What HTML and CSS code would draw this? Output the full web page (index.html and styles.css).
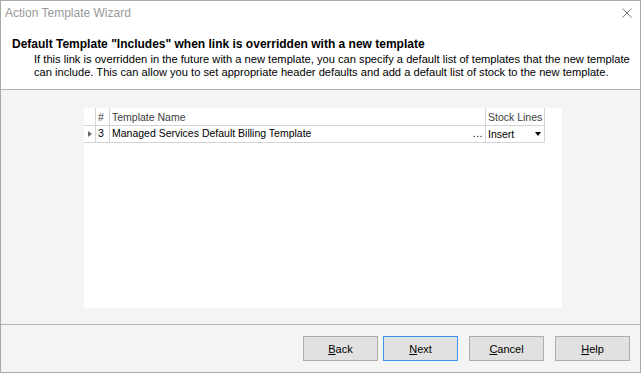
FILE: index.html
```html
<!DOCTYPE html>
<html lang="en">
  <head>
    <meta charset="UTF-8" />
    <title>Action Template Wizard</title>
    <link rel="stylesheet" href="styles.css">
  </head>
  <body>
    <div class="window">
      <div class="titlebar">
        <span class="title">Action Template Wizard</span>
        <svg class="close-btn" width="10" height="10" viewBox="0 0 10 10">
          <path d="M0.5 0.5 L9.5 9.5 M9.5 0.5 L0.5 9.5" stroke="#7a7a7a" stroke-width="1" fill="none" />
        </svg>
      </div>

      <div class="header">
        <div class="heading">Default Template "Includes" when link is overridden with a new template</div>
        <p class="desc">
          If this link is overridden in the future with a new template, you can specify a default list of templates that the new template<br />
          can include. This can allow you to set appropriate header defaults and add a default list of stock to the new template.
        </p>
      </div>

      <div class="content">
        <div class="grid-box">
          <div class="grid">
            <div class="cell head"></div>
            <div class="cell head">#</div>
            <div class="cell head">Template Name</div>
            <div class="cell head">Stock Lines</div>

            <div class="cell row ind"><span class="row-arrow"></span></div>
            <div class="cell row">3</div>
            <div class="cell row name">
              <span>Managed Services Default Billing Template</span>
              <span class="dots">...</span>
            </div>
            <div class="cell row combo">
              <span>Insert</span>
              <span class="drop-arrow"></span>
            </div>
          </div>
        </div>
      </div>

      <div class="footer">
        <button class="btn"><u>B</u>ack</button>
        <button class="btn btn-default"><u>N</u>ext</button>
        <button class="btn btn-gap"><u>C</u>ancel</button>
        <button class="btn btn-gap"><u>H</u>elp</button>
      </div>
    </div>
  </body>
</html>
```

FILE: styles.css
```css
body {
  margin: 0;
  padding: 0;
  background-color: #fff;
  font-family: "Liberation Sans", Arial, sans-serif;
  font-size: 12px;
  color: #000;
}

.window {
  width: 641px;
  height: 373px;
  border: 1px solid #a9a9a9;
  box-sizing: border-box;
  display: flex;
  flex-direction: column;
  background: #fff;
}

.titlebar {
  height: 24px;
  flex: none;
  display: flex;
  align-items: center;
  justify-content: space-between;
  padding: 0 8px 0 4px;
}
.title {
  color: #999;
  font-size: 12px;
}

.header {
  flex: none;
  padding: 12px 0 10px 11px;
  border-bottom: 1px solid #b4b4b4;
  white-space: nowrap;
}
.heading {
  font-weight: bold;
  font-size: 12px;
  line-height: 14px;
}
.desc {
  margin: 2px 0 0 22px;
  font-size: 11.15px;
  line-height: 13px;
}

.content {
  flex: 1;
  background: #f4f4f4;
  padding: 18px 0 16px 83px;
  border-bottom: 1px solid #b4b4b4;
}
.grid-box {
  width: 478px;
  height: 200px;
  background: #fff;
}
.grid {
  display: grid;
  grid-template-columns: 12px 14px 376px 59px;
  font-size: 10.5px;
}
.cell {
  border-right: 1px solid #d4d4d4;
  border-bottom: 1px solid #d4d4d4;
  padding: 0 2px;
  white-space: nowrap;
  overflow: hidden;
}
.cell.head {
  height: 17px;
  line-height: 18px;
  color: #3c3c3c;
}
.cell.row {
  height: 16px;
  line-height: 14px;
}
.cell.ind {
  display: flex;
  align-items: center;
  justify-content: center;
  padding: 0;
}
.row-arrow {
  width: 0;
  height: 0;
  border-left: 4px solid #6b6b6b;
  border-top: 3px solid transparent;
  border-bottom: 3px solid transparent;
}
.cell.name,
.cell.combo {
  display: flex;
  justify-content: space-between;
}
.dots {
  letter-spacing: 0.5px;
}
.cell.combo {
  align-items: center;
}
.drop-arrow {
  width: 0;
  height: 0;
  margin-right: 1px;
  border-top: 4px solid #000;
  border-left: 3.5px solid transparent;
  border-right: 3.5px solid transparent;
}

.footer {
  height: 47px;
  flex: none;
  box-sizing: border-box;
  background: #f4f4f4;
  display: flex;
  justify-content: flex-end;
  align-items: flex-start;
  padding: 11px 10px 0 0;
}
.btn {
  width: 75px;
  height: 25px;
  margin: 0 0 0 5px;
  padding: 0;
  font-family: "Liberation Sans", Arial, sans-serif;
  font-size: 11px;
  color: #000;
  background: #e1e1e1;
  border: 1px solid #adadad;
  border-radius: 0;
}
.btn-default {
  border-color: #3d94f0;
}
.btn-gap {
  margin-left: 11px;
}
```
